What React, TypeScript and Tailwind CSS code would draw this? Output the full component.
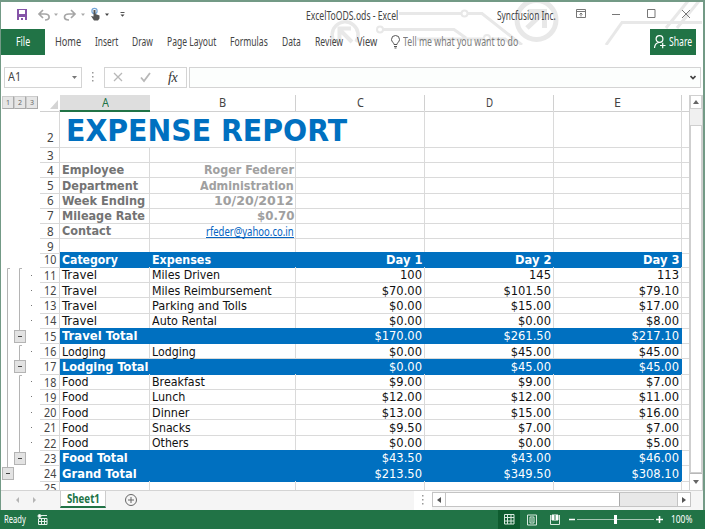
import { useLayoutEffect, useRef, useState, type ReactNode } from 'react';

const UI = "font-['Noto_Sans',sans-serif]";
const SHEET = "font-['DejaVu_Sans_Condensed','DejaVu_Sans',sans-serif]";

type FitProps = { w: number; children: string; className?: string };

// Keeps a label at a fixed width, narrowing or widening its glyphs as needed.
function Fit({ w, children, className = '' }: FitProps) {
  const ref = useRef<HTMLSpanElement>(null);
  const [scale, setScale] = useState(1);
  useLayoutEffect(() => {
    if (ref.current) setScale(w / ref.current.offsetWidth);
  }, [w, children]);
  return (
    <span className={`inline-block shrink-0 whitespace-nowrap ${className}`} style={{ width: w }}>
      <span ref={ref} className="inline-block origin-left" style={{ transform: `scaleX(${scale})` }}>
        {children}
      </span>
    </span>
  );
}

function Circuit() {
  return (
    <svg className="absolute left-0 top-0" width="702" height="43" viewBox="0 0 702 43" fill="none" stroke="#e8e8e8" strokeWidth="3">
      <path d="M398 11.500H460M467 11.500H481L521 43" />
      <circle cx="463.500" cy="11.500" r="3" strokeWidth="2" />
      <circle cx="379" cy="27.500" r="3" strokeWidth="2" />
      <path d="M382 27.500H453L465 36M416 37H483M489 37H504L512 43" />
      <circle cx="486" cy="36" r="3" strokeWidth="2" />
      <path d="M334 41A13 13 0 1 1 355 40" strokeWidth="3.500" />
      <path d="M351 40L339 28M338.500 38V26.500H350" strokeWidth="4" />
      <circle cx="535.500" cy="18" r="19.500" strokeWidth="5" />
      <path d="M526 26L542 11M527 9.500H543.500V26" strokeWidth="5" />
      <path d="M605 43L621 20.500H701M665 26L687 -1M676 26L698 -1" />
    </svg>
  );
}

function TitleBar() {
  return (
    <header className="relative flex h-[27px] items-center text-[12px] text-[#444]">
      <svg width="130" height="27" viewBox="0 0 130 27" fill="none" className="shrink-0">
        <path d="M16 7H26V18H16Z" fill="#8554a8" />
        <path d="M18 8H24V12H18ZM18 15H24V18H18Z" fill="#fff" />
        <path d="M20 16H22V18H20Z" fill="#8554a8" />
        <path d="M42 8L38 12L42 16M38.500 12H44C49 12 50 18 44 18" stroke="#a6a6a6" strokeWidth="1.700" />
        <path d="M70 8L74 12L70 16M73.500 12H68C62 12 62 18 68 18" stroke="#a6a6a6" strokeWidth="1.700" />
        <path d="M53 11.500H57L55 14ZM80 11.500H84L82 14Z" fill="#aaa" />
        <circle cx="93.500" cy="9" r="2.600" stroke="#75a5d6" strokeWidth="1.200" />
        <path d="M92.500 8H94.500V12L98.500 13.500V16.500L97 18.500H93L90 14L92.500 14.500Z" fill="#555" />
        <path d="M104 11.500H108L106 14ZM119.500 12.500H123.500L121.500 14.800Z" fill="#444" />
        <path d="M119.500 10.500H123.500" stroke="#555" />
      </svg>
      <Fit w={92} className="ml-[175px]">ExcelToODS.ods - Excel</Fit>
      <Fit w={59} className="ml-[99px]">Syncfusion Inc.</Fit>
      <svg width="120" height="27" viewBox="0 0 120 27" fill="none" stroke="#777" className="ml-[20px] shrink-0">
        <path d="M0.500 7.500H9.500V15.500H0.500ZM0.500 9.500H9.500M5 14.500V11M3.500 12.500L5 11L6.500 12.500" />
        <path d="M36 12.500H44M71.500 7.500H79V15.500H71.500ZM106 8L114 16M114 8L106 16" />
      </svg>
    </header>
  );
}

function Ribbon() {
  return (
    <nav className="relative flex h-[26px] items-center text-[12px] text-[#444]">
      <div className="flex h-[26px] w-11 shrink-0 items-center bg-[#217346] pl-[15px] text-white"><Fit w={14}>File</Fit></div>
      <Fit w={26} className="ml-[10px]">Home</Fit>
      <Fit w={23} className="ml-[14px]">Insert</Fit>
      <Fit w={21} className="ml-[14px]">Draw</Fit>
      <Fit w={49} className="ml-[14px]">Page Layout</Fit>
      <Fit w={38} className="ml-[14px]">Formulas</Fit>
      <Fit w={19} className="ml-[14px]">Data</Fit>
      <Fit w={28} className="ml-[14px]">Review</Fit>
      <Fit w={20} className="ml-[14px]">View</Fit>
      <svg width="9" height="14" viewBox="0 0 9 14" fill="none" stroke="#555" className="ml-[14px] shrink-0">
        <path d="M3 9.500C3 7.500 .5 7 .5 4.500A4 4 0 0 1 8.500 4.500C8.500 7 6 7.500 6 9.500ZM3 11.500H6M3.500 13H5.500" />
      </svg>
      <Fit w={115} className="ml-[3px] text-[#7b7b7b]">Tell me what you want to do</Fit>
      <div className="ml-auto mr-[7px] flex h-[26px] w-[46px] shrink-0 items-center bg-[#217346] pl-1 text-white">
        <svg width="12" height="14" viewBox="0 0 12 14" fill="none" stroke="#fff" strokeWidth="1.200">
          <circle cx="5.500" cy="4" r="3.400" />
          <path d="M0.500 13C.8 9 2.500 7.700 5 7.500M6 10.500H11.500M8.700 7.800V13.200" />
        </svg>
        <Fit w={23} className="ml-[3px]">Share</Fit>
      </div>
    </nav>
  );
}

function FormulaBar() {
  return (
    <div className="mt-[12px] flex h-[21px] pl-[3px]">
      <div className={`${UI} flex w-[78px] items-center border border-[#d4d4d4] pl-[3px] text-[12.5px] text-[#444]`}>
        <Fit w={13}>A1</Fit>
        <svg width="5" height="3" className="ml-[51px]"><path d="M0 0H5L2.500 3Z" fill="#777" /></svg>
      </div>
      <svg width="22" height="21" fill="#999"><path d="M10 5h1.500v1.500H10zM10 9h1.500v1.500H10zM10 13h1.500v1.500H10z" /></svg>
      <div className="flex w-[83px] items-center border border-[#d4d4d4]">
        <svg width="48" height="19" fill="none" stroke="#b8b8b8" strokeWidth="1.300"><path d="M9 5L17 13M17 5L9 13" /><path d="M36 9.500L39 13L45 5" strokeWidth="1.800" /></svg>
        <span className="ml-[15px] font-['Liberation_Serif',serif] text-[14px] italic leading-none tracking-[-0.5px] text-[#333]">fx</span>
      </div>
      <div className="ml-[2px] flex w-[512px] items-center justify-end border border-[#d4d4d4] bg-[#fcfefd] pr-[4px]">
        <svg width="6" height="5" fill="none" stroke="#444" strokeWidth="1.700"><path d="M0.500 1L3 3.500L5.500 1" /></svg>
      </div>
    </div>
  );
}

const DOT_Y = [276, 291, 306, 321, 352, 382, 397, 413, 428, 443];
const BOXES = [[14, 330], [14, 360], [14, 452], [2, 467]];

function Outline() {
  return (
    <aside className="w-[39px] shrink-0">
      <div className="mt-px flex h-[13px] pl-px text-[7px] leading-[11px] text-[#666]">
        {['1', '2', '3'].map((n) => (
          <div key={n} className="w-[12px] border border-[#ccc] border-r-[#aaa] border-b-[#aaa] bg-[#e6e6e6] text-center">{n}</div>
        ))}
      </div>
      <svg width="38" height="380" viewBox="1 109 38 380" fill="none" stroke="#b4b4b4">
        <path d="M10 268.500H7.500V467M22 268.500H19.500V330M22 345.500H19.500V360M22 375.500H19.500V452" />
        {DOT_Y.map((y) => <path key={y} d={`M31 ${y - 0.5}h1`} stroke="#777" />)}
        {BOXES.map(([x, y]) => (
          <g key={y}>
            <rect x={x + 0.5} y={y + 0.5} width="11" height="12" fill="#e3e3e3" />
            <path d={`M${x + 4} ${y + 6.5}h4`} stroke="#444" />
          </g>
        ))}
      </svg>
    </aside>
  );
}

type Label = [string, number];
type RowData = { n: number; a: Label; b?: Label; v: string[]; kind?: 'head' | 'total' };

const FOOD: Label = ['Food', 27];
const TRAVEL: Label = ['Travel', 35];
const ROWS: RowData[] = [
  { n: 10, a: ['Category', 56], b: ['Expenses', 59], v: ['Day 1', 'Day 2', 'Day 3'], kind: 'head' },
  { n: 11, a: TRAVEL, b: ['Miles Driven', 68], v: ['100', '145', '113'] },
  { n: 12, a: TRAVEL, b: ['Miles Reimbursement', 120], v: ['$70.00', '$101.50', '$79.10'] },
  { n: 13, a: TRAVEL, b: ['Parking and Tolls', 95], v: ['$0.00', '$15.00', '$17.00'] },
  { n: 14, a: TRAVEL, b: ['Auto Rental', 65], v: ['$0.00', '$0.00', '$8.00'] },
  { n: 15, a: ['Travel Total', 75], v: ['$170.00', '$261.50', '$217.10'], kind: 'total' },
  { n: 16, a: ['Lodging', 44], b: ['Lodging', 44], v: ['$0.00', '$45.00', '$45.00'] },
  { n: 17, a: ['Lodging Total', 86], v: ['$0.00', '$45.00', '$45.00'], kind: 'total' },
  { n: 18, a: FOOD, b: ['Breakfast', 53], v: ['$9.00', '$9.00', '$7.00'] },
  { n: 19, a: FOOD, b: ['Lunch', 33], v: ['$12.00', '$12.00', '$11.00'] },
  { n: 20, a: FOOD, b: ['Dinner', 37], v: ['$13.00', '$15.00', '$16.00'] },
  { n: 21, a: FOOD, b: ['Snacks', 39], v: ['$9.50', '$7.00', '$7.00'] },
  { n: 22, a: FOOD, b: ['Others', 37], v: ['$0.00', '$0.00', '$5.00'] },
  { n: 23, a: ['Food Total', 66], v: ['$43.50', '$43.00', '$46.00'], kind: 'total' },
  { n: 24, a: ['Grand Total', 75], v: ['$213.50', '$349.50', '$308.10'], kind: 'total' },
];

const INFO: { n: number; h: string; a?: Label; b?: Label }[] = [
  { n: 3, h: 'h-[14px]' },
  { n: 4, h: 'h-[16px]', a: ['Employee', 62], b: ['Roger Federer', 90] },
  { n: 5, h: 'h-[15px]', a: ['Department', 76], b: ['Administration', 94] },
  { n: 6, h: 'h-[15px]', a: ['Week Ending', 83], b: ['10/20/2012', 80] },
  { n: 7, h: 'h-[15px]', a: ['Mileage Rate', 83], b: ['$0.70', 37] },
  { n: 8, h: 'h-[16px]', a: ['Contact', 49], b: ['rfeder@yahoo.co.in', 88] },
  { n: 9, h: 'h-[13px]' },
];

const COLS = 'grid grid-cols-[20px_90px_146px_129px_129px_128px_7px]';

function Cell({ children, className = '' }: { children?: ReactNode; className?: string }) {
  return <div className={`flex min-w-0 items-center border-r border-b border-[#dadada] ${className}`}>{children}</div>;
}

function RowNo({ n }: { n: number }) {
  return (
    <div className={`${UI} flex items-center justify-center border-r border-b border-[#d8d8d8] pt-[2px] pl-[1px] text-[12.5px] leading-[12px] text-[#444]`}>
      <Fit w={n > 9 ? 12 : 6.5}>{String(n)}</Fit>
    </div>
  );
}

const fill = 'border-[#0070c0]! bg-[#0070c0] text-white';

function Sheet() {
  return (
    <main className={`${SHEET} h-[395px] w-[649px] shrink-0 overflow-hidden text-[12.8px] leading-none text-[#111]`}>
      <div className={`${COLS} ${UI} h-[15px] text-center text-[12.5px] leading-[15px] text-[#444]`}>
        <div className="flex items-end justify-end border-b border-[#d0d0d0] pr-[2px] pb-[2px]">
          <svg width="8" height="9"><path d="M8 0V9H0Z" fill="#d4d4d4" /></svg>
        </div>
        <div className="border-b-2 border-[#217346] bg-[#dedede] text-[#217346]"><Fit w={7}>A</Fit></div>
        {['B', 'C', 'D', 'E'].map((c) => (
          <div key={c} className="border-r border-b border-[#d0d0d0]"><Fit w={7}>{c}</Fit></div>
        ))}
        <div className="border-b border-[#d0d0d0]" />
      </div>
      <div className="grid h-[38px] grid-cols-[20px_365px_129px_128px_7px]">
        <div className={`${UI} flex items-end justify-center border-r border-b border-[#d8d8d8] pb-[3px] pl-[1px] text-[12.5px] leading-[12px] text-[#444]`}><Fit w={6.5}>2</Fit></div>
        <Cell className="pt-[3px] pl-[6px] text-[31px] font-bold text-[#0070c0]"><Fit w={281}>EXPENSE REPORT</Fit></Cell>
        <Cell /><Cell /><Cell className="border-r-0" />
      </div>
      {INFO.map(({ n, h, a, b }) => (
        <div key={n} className={`${COLS} ${h}`}>
          <RowNo n={n} />
          <Cell className="pt-[2px] pl-[2px] font-bold text-[#737373]">{a && <Fit w={a[1]}>{a[0]}</Fit>}</Cell>
          <Cell className={`justify-end pt-[2px] pr-[1px] ${n === 8 ? `${UI} text-[12px] text-[#0563c1]` : 'font-bold text-[#a0a0a0]'}`}>
            {b && <Fit w={b[1]} className={n === 8 ? 'border-b border-[#0563c1] leading-[11px]' : ''}>{b[0]}</Fit>}
          </Cell>
          <Cell /><Cell /><Cell /><Cell className="border-r-0" />
        </div>
      ))}
      {ROWS.map(({ n, a, b, v, kind }) => (
        <div key={n} className={`${COLS} h-[15.27px]`}>
          <RowNo n={n} />
          <Cell className={`pt-[2px] pl-[2px] ${kind ? `${fill} font-bold` : ''}`}><Fit w={a[1]}>{a[0]}</Fit></Cell>
          <Cell className={`pt-[2px] pl-[2px] ${kind ? `${fill} font-bold` : ''}`}>{b && <Fit w={b[1]}>{b[0]}</Fit>}</Cell>
          {v.map((value, i) => (
            <Cell key={i} className={`justify-end pt-[2px] pr-[2px] ${kind ? fill : ''} ${kind === 'head' ? 'font-bold' : ''}`}>
              {kind === 'head' ? <Fit w={36}>{value}</Fit> : value}
            </Cell>
          ))}
          <Cell className="border-r-0" />
        </div>
      ))}
      <div className={`${COLS} h-[16px]`}>
        <RowNo n={25} /><Cell /><Cell /><Cell /><Cell /><Cell /><Cell className="border-r-0" />
      </div>
    </main>
  );
}

function VerticalScroll() {
  return (
    <div className="flex w-[14px] flex-col border-x border-[#d0d0d0] bg-[#f0f0f0]">
      <div className="flex h-[14px] items-center justify-center border border-[#d0d0d0] bg-white"><svg width="6" height="4"><path d="M0 4L3 0L6 4Z" fill="#666" /></svg></div>
      <div className="h-[16px]" />
      <div className="grow border border-[#cfcfcf] bg-white" />
      <div className="flex h-[17px] items-center justify-center border-t border-[#b8b8b8] bg-white"><svg width="6" height="4"><path d="M0 0L3 4L6 0Z" fill="#666" /></svg></div>
    </div>
  );
}

function SheetTabs() {
  return (
    <div className={`${UI} flex h-[20px] border-t border-[#d4d4d4] bg-[#f5f5f5]`}>
      <svg width="59" height="18" fill="#b5b5b5" className="shrink-0"><path d="M18 6V12L15 9ZM32 6V12L35 9Z" /></svg>
      <div className="flex h-[17px] w-[46px] items-center justify-center border-x border-b-2 border-x-[#ccc] border-b-[#217346] bg-white text-[12px] font-bold text-[#217346]"><Fit w={33}>Sheet1</Fit></div>
      <svg width="308" height="19" fill="none" stroke="#666" className="shrink-0"><circle cx="25" cy="9" r="5.500" /><path d="M22 9H28M25 6V12" /></svg>
      <div className="flex w-[18px] justify-center bg-white pt-[3px]"><svg width="3" height="12" fill="#999"><path d="M0 1h1.500v1.500H0zM0 5h1.500v1.500H0zM0 9h1.500v1.500H0z" /></svg></div>
      <div className="mt-px flex h-[15px] w-[259px] border border-[#c4c4c4] bg-[#e8e8e8]">
        <div className="flex w-[13px] items-center justify-center border-r border-[#c4c4c4] bg-white"><svg width="4" height="6"><path d="M4 0V6L0 3Z" fill="#555" /></svg></div>
        <div className="w-[174px] border-r border-[#aaa] bg-white" />
        <div className="ml-auto flex w-[13px] items-center justify-center border-l border-[#c4c4c4] bg-white"><svg width="4" height="6"><path d="M0 0V6L4 3Z" fill="#555" /></svg></div>
      </div>
    </div>
  );
}

function StatusBar() {
  return (
    <footer className={`${UI} flex h-[19px] items-center bg-[#217346] pl-[4px] text-[10px] text-white`}>
      <Fit w={22}>Ready</Fit>
      <svg width="11" height="12" viewBox="0 0 11 12" fill="none" stroke="#e4f0e9" className="ml-[11px]">
        <path d="M4 1.500H10M1.500 5V10.500H10V4.500H1.500M1 7.500H10M4.500 5V10M7.500 5V10" /><circle cx="2.500" cy="2" r="1.500" fill="#fff" />
      </svg>
      <div className="ml-[450px] flex h-full w-[22px] shrink-0 items-center justify-center bg-[#0e5c2f]">
        <svg width="11" height="11" fill="none" stroke="#d8eadf"><path d="M.5 .5H10V10H.5ZM.5 3.500H10M.5 7H10M3.500 0V10M7 0V10" /></svg>
      </div>
      <svg width="33" height="12" fill="none" stroke="#d8eadf" className="ml-[7px] shrink-0">
        <path d="M.5 1H9.500V11H.5ZM3 3H7V9H3ZM4 5H6M4 7H6M23.500 1V10.500H32.500V1" /><path d="M25 1H31V6H25Z" fill="#fff" stroke="#fff" /><path d="M28 1V6" stroke="#217346" />
      </svg>
      <svg width="96" height="13" fill="none" stroke="#fff" className="ml-[8px] shrink-0">
        <path d="M1 6.500H7M88 6.500H95M91.500 3V10" strokeWidth="1.600" /><path d="M9 6.500H86" stroke="#a6c7b4" /><path d="M47.500 2V11" strokeWidth="3" />
      </svg>
      <Fit w={21} className="ml-[7px]">100%</Fit>
    </footer>
  );
}

export default function App() {
  return (
    <div className={`${UI} relative flex h-[529px] w-[705px] flex-col overflow-hidden bg-white`}>
      <div className="relative h-[510px] border-t-2 border-r-2 border-l border-[#739a86]">
        <Circuit />
        <TitleBar />
        <Ribbon />
        <FormulaBar />
        <div className="mt-[7px] flex h-[395px]">
          <Outline />
          <Sheet />
          <VerticalScroll />
        </div>
        <SheetTabs />
      </div>
      <StatusBar />
    </div>
  );
}
